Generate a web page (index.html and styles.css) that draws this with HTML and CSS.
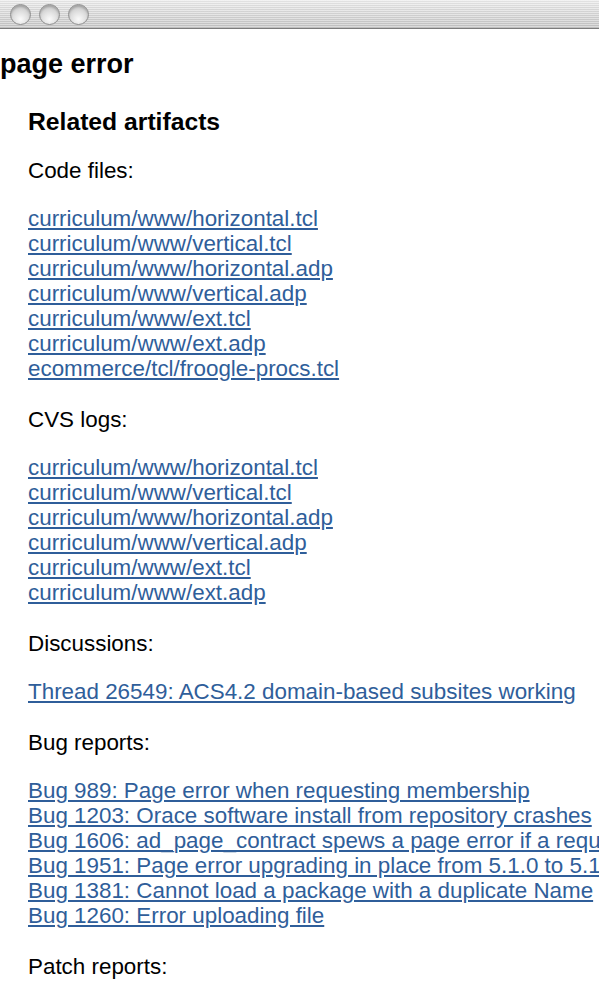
FILE: index.html
```html
<!DOCTYPE html>
<html lang="en">
<head>
  <meta charset="UTF-8">
  <meta name="viewport" content="width=device-width, initial-scale=1.0">
  <title>page error</title>
  <link rel="stylesheet" href="styles.css">
</head>
<body>
  <!-- window chrome -->
  <div class="titlebar">
    <span class="light"></span>
    <span class="light"></span>
    <span class="light"></span>
  </div>

  <div class="page">
    <h1>page error</h1>

    <div class="artifacts">
      <h2>Related artifacts</h2>

      <p class="label">Code files:</p>
      <ul class="links">
        <li><a href="#">curriculum/www/horizontal.tcl</a></li>
        <li><a href="#">curriculum/www/vertical.tcl</a></li>
        <li><a href="#">curriculum/www/horizontal.adp</a></li>
        <li><a href="#">curriculum/www/vertical.adp</a></li>
        <li><a href="#">curriculum/www/ext.tcl</a></li>
        <li><a href="#">curriculum/www/ext.adp</a></li>
        <li><a href="#">ecommerce/tcl/froogle-procs.tcl</a></li>
      </ul>

      <p class="label">CVS logs:</p>
      <ul class="links">
        <li><a href="#">curriculum/www/horizontal.tcl</a></li>
        <li><a href="#">curriculum/www/vertical.tcl</a></li>
        <li><a href="#">curriculum/www/horizontal.adp</a></li>
        <li><a href="#">curriculum/www/vertical.adp</a></li>
        <li><a href="#">curriculum/www/ext.tcl</a></li>
        <li><a href="#">curriculum/www/ext.adp</a></li>
      </ul>

      <p class="label">Discussions:</p>
      <ul class="links">
        <li><a href="#">Thread 26549: ACS4.2 domain-based subsites working</a></li>
      </ul>

      <p class="label">Bug reports:</p>
      <ul class="links">
        <li><a href="#">Bug 989: Page error when requesting membership</a></li>
        <li><a href="#">Bug 1203: Orace software install from repository crashes</a></li>
        <li><a href="#">Bug 1606: ad_page_contract spews a page error if a required variable is missing</a></li>
        <li><a href="#">Bug 1951: Page error upgrading in place from 5.1.0 to 5.1.1</a></li>
        <li><a href="#">Bug 1381: Cannot load a package with a duplicate Name</a></li>
        <li><a href="#">Bug 1260: Error uploading file</a></li>
      </ul>

      <p class="label">Patch reports:</p>
    </div>
  </div>
</body>
</html>
```

FILE: styles.css
```css
html {
  overflow: hidden;
}

body {
  margin: 0;
  background-color: #fff;
  color: #000;
  font-family: "Liberation Sans", Arial, sans-serif;
  overflow: hidden;
}

.titlebar {
  display: flex;
  align-items: center;
  gap: 8px;
  height: 28px;
  padding-left: 10px;
  border-bottom: 1px solid #7c7c7c;
  background:
    repeating-linear-gradient(180deg, rgba(255, 255, 255, 0.35) 0 1px, rgba(0, 0, 0, 0.04) 1px 2px),
    linear-gradient(180deg, #ececec, #d4d4d4 60%, #c6c6c6);
}

.light {
  box-sizing: border-box;
  width: 21px;
  height: 21px;
  border-radius: 50%;
  border: 1px solid #8e8e8e;
  background: radial-gradient(circle at 50% 75%, #fafafa 0, #e2e2e2 40%, #b9b9b9 100%);
  box-shadow: inset 0 2px 2px rgba(0, 0, 0, 0.18);
}

h1 {
  margin: 20px 0 0;
  font-size: 27px;
  line-height: 31px;
  font-weight: bold;
}

.artifacts {
  padding-left: 28px;
}

h2 {
  margin: 27px 0 22px;
  font-size: 24.7px;
  line-height: 29px;
  font-weight: bold;
}

.label {
  margin: 0 0 23px;
  font-size: 22.4px;
  line-height: 25px;
}

.links {
  list-style: none;
  margin: 0 0 26px;
  padding: 0;
  font-size: 22.4px;
  line-height: 25px;
  white-space: nowrap;
}

.links a {
  color: #2f5e9a;
  text-decoration: underline;
}
```
